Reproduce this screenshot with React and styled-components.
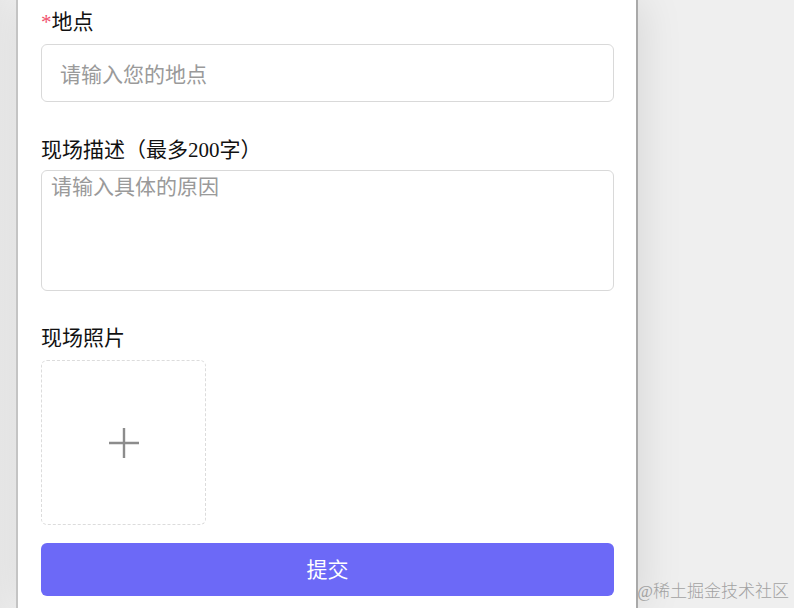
import React from "react";
import styled, { createGlobalStyle } from "styled-components";

const Global = createGlobalStyle`
  html, body { margin: 0; padding: 0; height: 100%; overflow: hidden; }
  body {
    background: #efefef;
    font-family: "Liberation Serif", "Noto Sans CJK SC", serif;
  }
  * { box-sizing: border-box; }
`;

const Page = styled.div`
  position: relative;
  width: 794px;
  height: 608px;
  overflow: hidden;
  background: linear-gradient(90deg, #e9e9e9 0px, #efefef 16px);
`;

const Panel = styled.div`
  margin-left: 16px;
  width: 622px;
  height: 100%;
  background: #fff;
  border-left: 2px solid #c4c4c4;
  border-right: 2px solid #a9a9a9;
  box-shadow: 4px 0 40px rgba(0, 0, 0, 0.1);
  padding: 7px 22px 0 23px;
  display: flex;
  flex-direction: column;
`;

const Field = styled.div`
  display: flex;
  flex-direction: column;
  margin-bottom: ${(p) => p.$gap || 0}px;
`;

const Label = styled.label`
  font-size: 21px;
  line-height: 30px;
  color: #111;
  margin-bottom: ${(p) => p.$mb ?? 7}px;
`;

const Star = styled.span`
  color: #f0506e;
`;

const Input = styled.input`
  width: 100%;
  height: 58px;
  border: 1px solid #d9d9d9;
  border-radius: 6px;
  padding: 0 18px;
  font-size: 21px;
  font-family: "Noto Sans CJK SC", sans-serif;
  color: #333;
  outline: none;
  &::placeholder { color: #9a9a9a; }
`;

const TextArea = styled.textarea`
  width: 100%;
  height: 121px;
  border: 1px solid #d9d9d9;
  border-radius: 6px;
  padding: 0 9px;
  font-size: 21px;
  line-height: 28px;
  font-family: "Noto Sans CJK SC", sans-serif;
  color: #333;
  resize: none;
  outline: none;
  &::placeholder { color: #9a9a9a; }
`;

const Upload = styled.div`
  width: 165px;
  height: 165px;
  border: 1px dashed #dcdcdc;
  border-radius: 6px;
  display: flex;
  align-items: center;
  justify-content: center;
`;

const Submit = styled.button`
  width: 100%;
  height: 53px;
  border: none;
  border-radius: 6px;
  background: #6c69f7;
  color: #fff;
  font-size: 21px;
  line-height: 1;
  padding: 0 0 3px;
  font-family: "Noto Sans CJK SC", sans-serif;
  cursor: pointer;
`;

const Watermark = styled.div`
  position: absolute;
  right: 5px;
  bottom: 5px;
  font-size: 17px;
  line-height: 22px;
  color: #a2a2a2;
  font-family: "Liberation Serif", "Noto Sans CJK SC", serif;
  font-weight: 300;
`;

const Plus = () => (
  <svg width="32" height="32" viewBox="0 0 32 32">
    <path d="M16 1v30M1 16h30" stroke="#8c8c8c" strokeWidth="2.4" fill="none" />
  </svg>
);

export default function App() {
  return (
    <>
      <Global />
      <Page>
        <Panel>
          <Field $gap={33}>
            <Label>
              <Star>*</Star>地点
            </Label>
            <Input placeholder="请输入您的地点" />
          </Field>
          <Field $gap={32}>
            <Label $mb={5}>现场描述（最多200字）</Label>
            <TextArea placeholder="请输入具体的原因" />
          </Field>
          <Field $gap={18}>
            <Label>现场照片</Label>
            <Upload>
              <Plus />
            </Upload>
          </Field>
          <Submit>提交</Submit>
        </Panel>
        <Watermark>@稀土掘金技术社区</Watermark>
      </Page>
    </>
  );
}
